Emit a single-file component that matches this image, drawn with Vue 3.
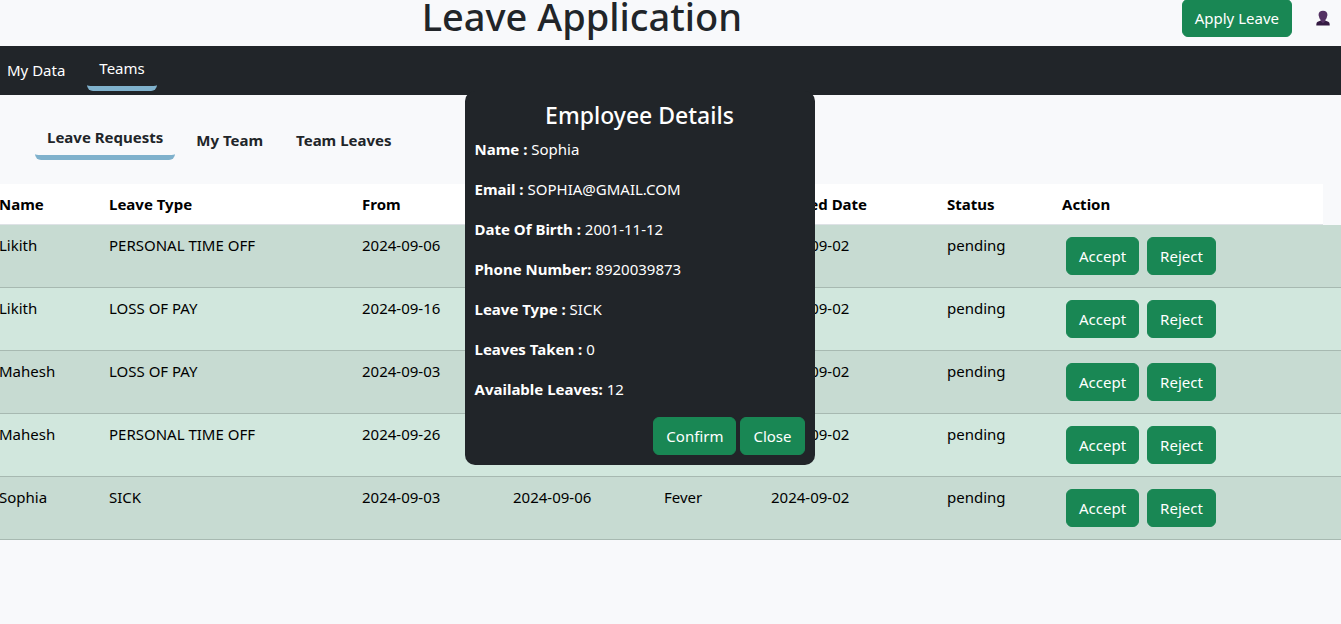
<script setup>
import { ref } from 'vue'

const sections = ['My Data', 'Teams']
const activeSection = ref('Teams')

const tabs = ['Leave Requests', 'My Team', 'Team Leaves']
const activeTab = ref('Leave Requests')

const columns = ['Name', 'Leave Type', 'From', 'To', 'Reason', 'Applied Date', 'Status', 'Action']

const requests = [
  { name: 'Likith', type: 'PERSONAL TIME OFF', from: '2024-09-06', to: '', reason: '', applied: '2024-09-02', status: 'pending' },
  { name: 'Likith', type: 'LOSS OF PAY', from: '2024-09-16', to: '', reason: '', applied: '2024-09-02', status: 'pending' },
  { name: 'Mahesh', type: 'LOSS OF PAY', from: '2024-09-03', to: '', reason: '', applied: '2024-09-02', status: 'pending' },
  { name: 'Mahesh', type: 'PERSONAL TIME OFF', from: '2024-09-26', to: '', reason: '', applied: '2024-09-02', status: 'pending' },
  { name: 'Sophia', type: 'SICK', from: '2024-09-03', to: '2024-09-06', reason: 'Fever', applied: '2024-09-02', status: 'pending' }
]

const details = [
  ['Name :', 'Sophia'],
  ['Email :', 'SOPHIA@GMAIL.COM'],
  ['Date Of Birth :', '2001-11-12'],
  ['Phone Number:', '8920039873'],
  ['Leave Type :', 'SICK'],
  ['Leaves Taken :', '0'],
  ['Available Leaves:', '12']
]
const showDetails = ref(true)
</script>

<template>
  <div class="page">
    <header class="header">
      <h1 class="title">Leave Application</h1>
      <div class="header-actions">
        <button type="button" class="btn apply">Apply Leave</button>
        <button type="button" class="profile" aria-label="Profile">
          <svg viewBox="0 0 14 16" width="14" height="16" aria-hidden="true">
            <path fill="#341b42" d="M.3 15.600c0-2.500.4-3.500 2-4.100l2.800-1h3.800l2.800 1c1.600.6 2 1.600 2 4.100z" />
            <path fill="#543263" d="M7 .7c2.700 0 4.400 1.600 4.400 3.900 0 1-.1 1.500-.4 2-.2 1.500-.8 2.600-1.700 3.300v1.400L7 13.200l-2.300-1.900V9.900C3.800 9.200 3.200 8.100 3 6.600c-.3-.5-.4-1-.4-2C2.600 2.300 4.300.7 7 .7z" />
          </svg>
        </button>
      </div>
    </header>

    <nav class="nav">
      <button
        v-for="section in sections"
        :key="section"
        type="button"
        class="tab"
        :class="{ active: section === activeSection }"
        @click="activeSection = section"
      >{{ section }}</button>
    </nav>

    <main>
      <div class="subnav">
        <button
          v-for="tab in tabs"
          :key="tab"
          type="button"
          class="tab"
          :class="{ active: tab === activeTab }"
          @click="activeTab = tab"
        >{{ tab }}</button>
      </div>

      <table class="requests">
        <colgroup>
          <col class="c-name" />
          <col class="c-type" />
          <col class="c-date" />
          <col class="c-date" />
          <col class="c-reason" />
          <col class="c-applied" />
          <col class="c-status" />
          <col />
          <col class="c-end" />
        </colgroup>
        <thead>
          <tr>
            <th v-for="column in columns" :key="column" scope="col">{{ column }}</th>
          </tr>
        </thead>
        <tbody>
          <tr v-for="(r, i) in requests" :key="i">
            <td>{{ r.name }}</td>
            <td>{{ r.type }}</td>
            <td>{{ r.from }}</td>
            <td>{{ r.to }}</td>
            <td>{{ r.reason }}</td>
            <td>{{ r.applied }}</td>
            <td>{{ r.status }}</td>
            <td>
              <div class="row-actions">
                <button type="button" class="btn">Accept</button>
                <button type="button" class="btn">Reject</button>
              </div>
            </td>
            <td></td>
          </tr>
        </tbody>
      </table>
    </main>

    <section v-if="showDetails" class="dialog" role="dialog" aria-labelledby="dialog-title">
      <h2 id="dialog-title">Employee Details</h2>
      <p v-for="[label, value] in details" :key="label"><b>{{ label }}</b> {{ value }}</p>
      <div class="dialog-actions">
        <button type="button" class="btn">Confirm</button>
        <button type="button" class="btn" @click="showDetails = false">Close</button>
      </div>
    </section>
  </div>
</template>

<style>
body {
  background: #f8f9fb;
  overflow-x: hidden;
}
</style>

<style scoped>
.page {
  position: relative;
  min-height: 100vh;
  overflow: hidden;
  color: #212529;
  background: #f8f9fb;
  font: 15px/24px "Segoe UI", "Noto Sans", sans-serif;
}

.page * {
  box-sizing: border-box;
}

button {
  font: inherit;
  cursor: pointer;
}

.header {
  display: flex;
  align-items: flex-start;
  height: 46px;
}

.title {
  flex: 1;
  margin: 0;
  font-size: 38px;
  font-weight: 500;
  line-height: 32px;
  text-align: center;
}

.header-actions {
  display: flex;
  align-items: center;
  gap: 24px;
  margin-top: -1px;
  padding: 0 11px 0 18px;
}

.btn {
  height: 38px;
  padding: 6px 12px;
  border: 1px solid #198754;
  border-radius: 6px;
  color: #fff;
  background: #198754;
  white-space: nowrap;
}

.profile {
  display: flex;
  padding: 0;
  border: 0;
  background: none;
}

.nav {
  display: flex;
  align-items: center;
  gap: 10px;
  height: 49px;
  padding-top: 1px;
  background: #212529;
}

.tab {
  padding: 4px 12px 6px;
  border: 0;
  border-radius: 6px;
  color: inherit;
  background: none;
}

.tab.active {
  border-bottom: 5px solid #7fb1cc;
}

.nav .tab {
  color: #fff;
}

.nav .tab:first-child {
  margin-left: -5px;
}

.subnav {
  display: flex;
  align-items: center;
  gap: 9px;
  padding: 26px 35px 24px;
  font-weight: 700;
}

.requests {
  width: calc(100% + 9px);
  margin-left: -9px;
  table-layout: fixed;
  border-collapse: separate;
  border-spacing: 0;
  color: #000;
}

.c-name { width: 110px; }
.c-type { width: 253px; }
.c-date { width: 151px; }
.c-reason { width: 107px; }
.c-applied { width: 176px; }
.c-status { width: 115px; }
.c-end { width: 18px; }

th,
td {
  padding: 8px;
  text-align: left;
  vertical-align: top;
}

th {
  border-bottom: 1px solid #dee2e6;
  background: #fff;
  font-weight: 700;
}

td {
  border-bottom: 1px solid #a7b9b1;
  background: #d1e7dd;
}

tbody tr:nth-child(odd) td {
  background: #c7dbd2;
}

.row-actions {
  display: flex;
  gap: 8px;
  padding: 4px;
}

.dialog {
  position: absolute;
  top: 91px;
  left: calc(50% - 206px);
  width: 350px;
  padding: 10px;
  border-radius: 10px;
  color: #fff;
  background: #212529;
}

.dialog h2 {
  margin: 0 0 8px;
  font-size: 23px;
  font-weight: 500;
  line-height: 28px;
  text-align: center;
}

.dialog p {
  margin: 0 0 16px;
}

.dialog b {
  font-weight: 700;
}

.dialog-actions {
  display: flex;
  justify-content: flex-end;
  gap: 4px;
}
</style>
